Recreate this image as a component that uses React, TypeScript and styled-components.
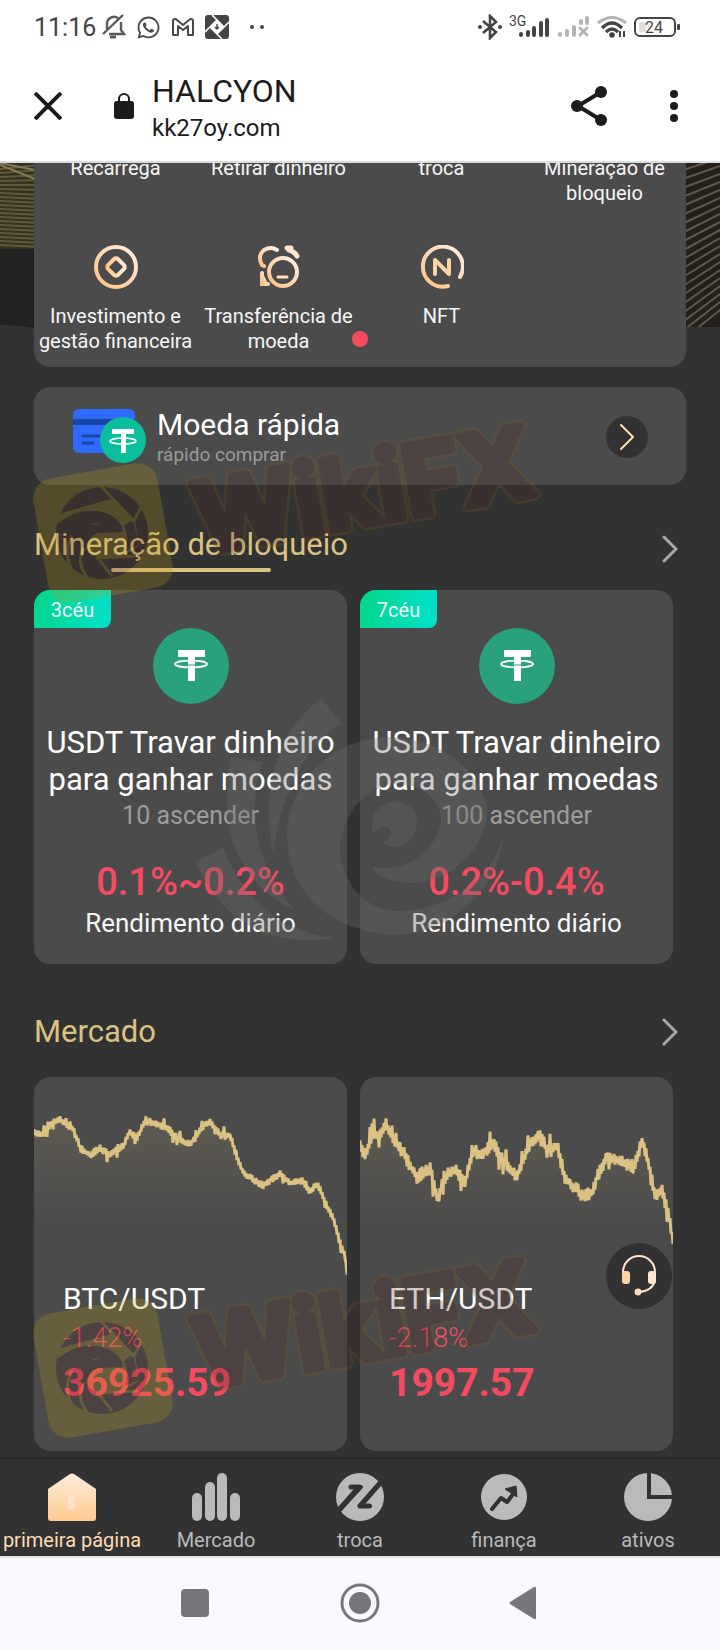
import React from "react";
import styled, { createGlobalStyle } from "styled-components";
import { FaWhatsapp } from "react-icons/fa";

const gold = "#dcc282";
const peach = "#ffdcb4";
const muted = "#bababa";
const panel = "#4b4b4b";
const base = "#323232";
const red = "#f44b60";

const GlobalStyle = createGlobalStyle`
  *, *::before, *::after { box-sizing: border-box; }
  body { margin: 0; background: ${base}; font-family: Roboto, "Liberation Sans", sans-serif; }
  h1, h2, h3, p { margin: 0; font-weight: 400; }
  button { border: 0; padding: 0; background: none; font: inherit; color: inherit; cursor: pointer; }
  a { color: inherit; text-decoration: none; }
  svg { display: block; flex: none; }
`;

const Page = styled.div`
  display: flex;
  flex-direction: column;
  min-height: 100vh;
`;

/* ---------- Phone status bar and browser bar ---------- */

const StatusBar = styled.div`
  display: flex;
  align-items: center;
  height: 54px;
  padding: 0 40px 0 34px;
  background: #fff;
  color: #444;
`;

const Clock = styled.time`
  font-size: 25px;
  line-height: 32px;
  margin: 2px 6px 0 0;
`;

const StatusGroup = styled.div<{ $end?: boolean }>`
  display: flex;
  align-items: center;
  gap: ${(p) => (p.$end ? "7px" : "10px")};
  margin-left: ${(p) => (p.$end ? "auto" : "0")};
`;

const BrowserBar = styled.header`
  display: flex;
  align-items: center;
  height: 109px;
  padding: 0 41px 4px 34px;
  background: #fff;
  border-bottom: 2px solid #dcdcdc;
  color: #1c1c1c;
`;

const IconButton = styled.button`
  display: grid;
  place-items: center;
  color: inherit;
`;

const LockSlot = styled.span`
  margin: 0 18px 0 52px;
`;

const Address = styled.div`
  flex: 1;
  min-width: 0;
  padding-top: 4px;
`;

const SiteTitle = styled.h1`
  font-size: 32px;
  line-height: 40px;
`;

const SiteUrl = styled.p`
  font-size: 24px;
  line-height: 34px;
`;

const BarActions = styled.div`
  display: flex;
  align-items: center;
  gap: 60px;
`;

/* ---------- Page content ---------- */

const Content = styled.main`
  position: relative;
  flex: 1;
  overflow: hidden;
  background: ${base};
  color: #f6f6f6;
  padding-bottom: 5px;
`;

const Backdrop = styled.svg`
  position: absolute;
  top: 0;
  left: 0;
  width: 100%;
  height: 166px;
`;

const Actions = styled.nav`
  position: relative;
  display: grid;
  grid-template-columns: repeat(4, 1fr);
  row-gap: 39px;
  margin: -7px 34px 20px;
  padding-bottom: 13px;
  background: ${panel};
  border-radius: 0 0 16px 16px;
`;

const Action = styled.a`
  display: flex;
  flex-direction: column;
  align-items: center;
  gap: 15px;
  font-size: 20px;
  line-height: 25px;
  text-align: center;
`;

const NoticeDot = styled.span`
  position: absolute;
  left: 50%;
  bottom: 20px;
  width: 16px;
  height: 16px;
  margin-left: -8px;
  border-radius: 50%;
  background: ${red};
`;

const QuickBuy = styled.a`
  display: flex;
  align-items: center;
  margin: 0 34px;
  height: 98px;
  padding: 1px 38px 0;
  border-radius: 16px;
  background: ${panel};
`;

const QuickText = styled.span`
  display: flex;
  flex-direction: column;
  flex: 1;
  padding-left: 10px;
`;

const QuickTitle = styled.strong`
  font-size: 30px;
  line-height: 36px;
  font-weight: 400;
  color: #fff;
`;

const QuickSub = styled.small`
  font-size: 19px;
  line-height: 24px;
  color: #9a9a9a;
`;

const RoundArrow = styled.span`
  display: grid;
  place-items: center;
  width: 42px;
  height: 42px;
  border-radius: 50%;
  background: ${base};
`;

const SectionHead = styled.div<{ $active?: boolean }>`
  display: flex;
  justify-content: space-between;
  align-items: center;
  margin: ${(p) => (p.$active ? "40px 42px 18px 34px" : "48px 42px 25px 34px")};
`;

const SectionTitle = styled.h2<{ $active?: boolean }>`
  font-size: 31px;
  line-height: 40px;
  color: ${gold};

  &::after {
    content: "";
    display: ${(p) => (p.$active ? "block" : "none")};
    width: 160px;
    height: 4px;
    margin: 3px auto 0;
    border-radius: 2px;
    background: ${gold};
  }
`;

const CardRow = styled.div`
  display: grid;
  grid-template-columns: 1fr 1fr;
  gap: 13px;
  padding: 0 47px 0 34px;
`;

const Card = styled.article`
  display: flex;
  flex-direction: column;
  height: 374px;
  border-radius: 16px;
  overflow: hidden;
  background: ${panel};
`;

const Term = styled.span`
  align-self: flex-start;
  width: 77px;
  height: 38px;
  border-radius: 6px 0 8px 0;
  background: linear-gradient(100deg, #04d68a, #02e0cc);
  font-size: 20px;
  line-height: 40px;
  text-align: center;
`;

const PoolBody = styled.div`
  display: flex;
  flex-direction: column;
  align-items: center;
  text-align: center;
`;

const PoolTitle = styled.h3`
  margin-top: 20px;
  font-size: 31px;
  line-height: 37px;
  font-weight: 400;
  color: #fff;
`;

const PoolLimit = styled.p`
  font-size: 25px;
  line-height: 36px;
  color: #9c9c9c;
`;

const PoolRate = styled.p`
  margin-top: 25px;
  font-size: 38px;
  font-weight: 500;
  line-height: 46px;
  color: ${red};
`;

const PoolCaption = styled.p`
  font-size: 26px;
  line-height: 36px;
`;

const Quote = styled.div`
  padding: 1px 29px;
`;

const Pair = styled.h3`
  font-size: 30px;
  line-height: 40px;
  color: #fff;
`;

const Change = styled.p`
  font-size: 27px;
  line-height: 38px;
  font-weight: 300;
  color: ${red};
`;

const Price = styled.p`
  font-size: 39px;
  line-height: 52px;
  font-weight: 700;
  color: ${red};
`;

const Support = styled.button`
  position: absolute;
  right: 48px;
  bottom: 148px;
  display: grid;
  place-items: center;
  width: 66px;
  height: 66px;
  border-radius: 50%;
  background: ${base};
`;

const Mark = styled.svg<{ $x: number; $y: number }>`
  position: absolute;
  left: ${(p) => p.$x}px;
  top: ${(p) => p.$y}px;
  pointer-events: none;
`;

/* ---------- Bottom bars ---------- */

const TabBar = styled.nav`
  display: grid;
  grid-template-columns: repeat(5, 1fr);
  height: 99px;
  padding-top: 14px;
  border-top: 2px solid #282828;
  background: ${base};
`;

const Tab = styled.a<{ $active?: boolean }>`
  display: flex;
  flex-direction: column;
  align-items: center;
  gap: 7px;
  font-size: 20px;
  line-height: 24px;
  white-space: nowrap;
  color: ${(p) => (p.$active ? peach : muted)};
`;

const SystemBar = styled.div`
  display: flex;
  justify-content: center;
  align-items: center;
  gap: 115px;
  height: 94px;
  padding-bottom: 2px;
  border-top: 2px solid #e4e4ea;
  background: #f9f9fe;
  color: #77777b;
`;

/* ---------- Drawings ---------- */

const Peach = ({ id }: { id: string }) => (
  <linearGradient id={id} x1="0" y1="1" x2="1" y2="0">
    <stop offset="0" stopColor="#ffc182" />
    <stop offset="0.6" stopColor="#ffdcbd" />
    <stop offset="1" stopColor="#fff0e2" />
  </linearGradient>
);

const BellOff = () => (
  <svg width="24" height="26" viewBox="0 0 24 26" fill="none" stroke="#5a5a5a" strokeWidth="2.4">
    <path d="M5 15V10a7 7 0 0 1 12-5M19 8v8l3 4H7M1 20 21 1" />
    <path d="M8 23h6" strokeWidth="3" />
  </svg>
);

const MailM = () => (
  <svg width="24" height="20" viewBox="0 0 24 20" fill="none" stroke="#4a4a4a" strokeWidth="2" strokeLinejoin="round">
    <path d="M2 18V4q0-2 2-2 1 0 2 1l6 5 6-5q1-1 2-1 2 0 2 2v14h-5V9l-5 4-5-4v9z" />
  </svg>
);

const Tile = () => (
  <svg width="24" height="24" viewBox="0 0 24 24">
    <rect width="24" height="24" rx="3" fill="#444" />
    <path d="M12 5 19 12 12 19 5 12z" fill="#fff" />
    <path d="M7 0 19 12M24 7 12 19M17 24 5 12M0 17 12 5" stroke="#fff" strokeWidth="1.6" />
    <path d="M12 9v5M10 12l2 2 2-2" stroke="#444" strokeWidth="1.4" fill="none" />
  </svg>
);

const Dots = () => (
  <svg width="16" height="6" viewBox="0 0 16 6" fill="#444">
    <circle cx="3" cy="3" r="2" />
    <circle cx="13" cy="3" r="2" />
  </svg>
);

const Bluetooth = () => (
  <svg width="24" height="26" viewBox="0 0 24 26" fill="none" stroke="#444" strokeWidth="2.6">
    <path d="M5 7 18 18l-6 6V2l6 6L5 19" />
    <circle cx="22" cy="13" r="2" fill="#444" stroke="none" />
    <circle cx="2" cy="13" r="2" fill="#444" stroke="none" />
  </svg>
);

const Signal3G = () => (
  <svg width="42" height="26" viewBox="0 0 42 26">
    <text x="0" y="12" fontFamily="Roboto, sans-serif" fontSize="14" fill="#444">3G</text>
    <g stroke="#444" strokeWidth="4" strokeLinecap="round">
      <path d="M12 21v-1M19 21v-3M25 21v-7M32 21V9M38 21V6" />
    </g>
  </svg>
);

const SignalNone = () => (
  <svg width="32" height="24" viewBox="0 0 32 24" fill="none" stroke="#b4b4b4" strokeWidth="4" strokeLinecap="round">
    <path d="M2 20v-1M9 20v-4M16 20v-8M23 8V6M29 8V3" />
    <path d="M22 13l7 7M29 13l-7 7" strokeWidth="3" />
  </svg>
);

const Wifi = () => (
  <svg width="30" height="24" viewBox="0 0 30 24" fill="none" strokeWidth="3">
    <path d="M1 8Q15-3 29 8" stroke="#b4b4b4" />
    <path d="M5 13Q15 3 25 13M9 17Q15 11 21 17" stroke="#444" strokeWidth="3.4" />
    <circle cx="15" cy="20" r="2.8" fill="#444" />
    <path d="M23 16v6M27 16v6" stroke="#444" strokeWidth="2" />
  </svg>
);

const Battery = () => (
  <svg width="46" height="22" viewBox="0 0 46 22">
    <rect x="1" y="2" width="40" height="18" rx="5" fill="none" stroke="#444" strokeWidth="2" />
    <rect x="43" y="8" width="3" height="6" rx="1" fill="#444" />
    <rect x="5" y="6" width="7" height="10" rx="2" fill="#ddd" />
    <text x="20" y="17" fontFamily="Roboto, sans-serif" fontSize="16" textAnchor="middle" fill="#444">24</text>
  </svg>
);

const Invest = () => (
  <svg width="44" height="44" viewBox="0 0 44 44" fill="none" stroke="url(#pInvest)" strokeWidth="4">
    <defs><Peach id="pInvest" /></defs>
    <circle cx="22" cy="22" r="20" />
    <rect x="15" y="15" width="14" height="14" rx="3" transform="rotate(45 22 22)" />
  </svg>
);

const Transfer = () => (
  <svg width="44" height="44" viewBox="0 0 44 44" fill="none" stroke="url(#pTransfer)" strokeWidth="4" strokeLinecap="round">
    <defs><Peach id="pTransfer" /></defs>
    <circle cx="26" cy="27" r="14" />
    <path d="M20 5Q14 1 7 5 0 11 5 20l2 1" />
    <path d="M21 32h9" stroke="#ffe2c8" strokeWidth="3" />
    <path d="M5 28v11h6M5 31l4 8" />
    <path d="M30 3h4M32 5q5 1 8 6" stroke="#ffe7d2" strokeWidth="5" />
  </svg>
);

const Nft = () => (
  <svg width="44" height="44" viewBox="0 0 44 44" fill="none" stroke="url(#pNft)" strokeWidth="4" strokeLinecap="round">
    <defs><Peach id="pNft" /></defs>
    <path d="M28 41A20 20 0 1 1 40 32" />
    <path d="M15 29V15L29 29V15" stroke="#ffd2a2" strokeLinejoin="round" />
  </svg>
);

const CardCoin = () => (
  <svg width="75" height="56" viewBox="0 0 75 56">
    <rect x="1" y="0" width="62" height="44" rx="6" fill="#2f6bfa" />
    <rect x="1" y="10" width="62" height="6" fill="#1c45a8" />
    <path d="M11 27h20M11 34h10" stroke="#1c45a8" strokeWidth="3" strokeLinecap="round" />
    <circle cx="51" cy="31" r="23" fill="#0cbf9c" />
    <path d="M40 20h22v5h-8v19h-5V25h-9z" fill="#fff" />
    <ellipse cx="51" cy="32" rx="13" ry="3" fill="none" stroke="#fff" strokeWidth="1.6" />
  </svg>
);

const Tether = () => (
  <svg width="76" height="76" viewBox="0 0 76 76">
    <circle cx="38" cy="38" r="38" fill="#28a17c" />
    <path d="M25 22h27v7H42v24h-7V29H25z" fill="#fff" />
    <ellipse cx="38" cy="36" rx="16" ry="3.4" fill="none" stroke="#fff" strokeWidth="1.8" />
    <path d="M35 37h7" stroke="#28a17c" strokeWidth="1" />
  </svg>
);

const Chevron = ({ color = "#a8a8a8", width = 3 }: { color?: string; width?: number }) => (
  <svg width="16" height="30" viewBox="0 0 16 30" fill="none" stroke={color} strokeWidth={width} strokeLinecap="round" strokeLinejoin="round">
    <path d="M2 3 14 15 2 27" />
  </svg>
);

const Headset = () => (
  <svg width="36" height="42" viewBox="0 0 36 42" fill="none" stroke="#ffe3cb" strokeWidth="2">
    <path d="M2 19V17a16 16 0 0 1 32 0v8q-2 11-17 12" />
    <rect x="1" y="16" width="8" height="13" rx="3" fill="#ffd2a6" stroke="none" />
    <rect x="27" y="16" width="8" height="13" rx="3" fill="#ffe7d3" stroke="none" />
    <circle cx="17" cy="37" r="3.4" fill="#ffd9b8" stroke="none" />
  </svg>
);

const HomeIcon = () => (
  <svg width="48" height="48" viewBox="0 0 48 48">
    <defs>
      <linearGradient id="home" x1="0" y1="0" x2="0" y2="1">
        <stop offset="0" stopColor="#ffeedd" />
        <stop offset="1" stopColor="#ffc98f" />
      </linearGradient>
    </defs>
    <path d="M22 1q2-1 4 0l22 15v29q0 3-3 3H3q-3 0-3-3V16z" fill="url(#home)" />
    <rect x="20" y="22" width="7" height="14" rx="3" fill="#ffe4cd" />
  </svg>
);

const BarsIcon = () => (
  <svg width="48" height="48" viewBox="0 0 48 48" fill={muted}>
    <rect x="0" y="20" width="10" height="28" rx="5" />
    <rect x="13" y="9" width="10" height="39" rx="5" />
    <rect x="25" y="0" width="10" height="48" rx="5" />
    <rect x="38" y="20" width="10" height="28" rx="5" />
  </svg>
);

const SwapIcon = () => (
  <svg width="48" height="48" viewBox="0 0 48 48" fill="none" stroke={base} strokeLinecap="round" strokeLinejoin="round">
    <circle cx="24" cy="24" r="24" fill={muted} stroke="none" />
    <path d="M2 38 23 14H15M45 9 24 33h9" strokeWidth="5" />
    <path d="M16 14h9L3 38M27 33h7" strokeWidth="4" />
  </svg>
);

const TrendIcon = () => (
  <svg width="48" height="48" viewBox="0 0 48 48">
    <circle cx="24" cy="24" r="23" fill={muted} />
    <path d="M12 36 21 25l6 4 7-9" fill="none" stroke={base} strokeWidth="4" strokeLinecap="round" strokeLinejoin="round" />
    <path d="M25 16 36 13l1 11z" fill={base} stroke={base} strokeWidth="1" strokeLinejoin="round" />
  </svg>
);

const PieIcon = () => (
  <svg width="48" height="48" viewBox="0 0 48 48">
    <circle cx="24" cy="24" r="24" fill={muted} />
    <path d="M25 0v24h23" fill="none" stroke={base} strokeWidth="4" />
  </svg>
);

const BackdropArt = () => (
  <Backdrop viewBox="0 0 720 166" preserveAspectRatio="none" aria-hidden="true">
    <rect width="40" height="166" fill="#222" />
    <rect width="40" height="86" fill="#35301f" />
    <g stroke="#5f583e" strokeWidth="2">
      {Array.from({ length: 20 }, (_, i) => (
        <path key={i} d={`M0 ${i * 4 + 6} L40 ${i * 4 + 8 - Math.max(0, 6 - i)}`} />
      ))}
      <path d="M0 2 40 18" stroke="#857a52" />
      <path d="M0 0 40 8" stroke="#857a52" />
    </g>
    <path d="M0 162Q20 162 40 166H0z" fill={base} />
    <rect x="680" width="40" height="164" fill="#241f1a" />
    <g stroke="#5e594b" strokeWidth="2">
      {Array.from({ length: 20 }, (_, i) => (
        <path key={i} d={`M680 ${i * 9 + 8} L720 ${i * 9 - 5 - i}`} />
      ))}
    </g>
    <rect x="680" y="164" width="40" height="2" fill={base} />
  </Backdrop>
);

const WikiMark = ({ y }: { y: number }) => (
  <Mark $x={20} $y={y} width="560" height="210" viewBox="0 0 560 210" aria-hidden="true">
    <g opacity="0.25">
      <rect x="20" y="72" width="126" height="126" rx="20" fill="#b89a14" transform="rotate(-10 83 135)" />
      <circle cx="82" cy="135" r="46" fill="#4e2824" />
      <path
        d="M38 116 94 100 115 122 119 148 100 160H80Q70 158 66 150 68 138 78 135L103 134Q102 122 86 115 60 107 37 126z"
        fill="#b89a14"
      />
      <path d="M104 128 113 121 119 147 105 153Q110 140 104 128z" fill="#4e2824" />
      <path
        d="M80 87 114 124M124 104 113 124M76 160 118 158M78 160 92 178M64 150Q54 168 72 184M52 138Q40 160 58 180"
        fill="none"
        stroke="#b89a14"
        strokeWidth="3"
      />
      <path d="M68 124q7 4 12 0-4 6-12 0z" fill="#b89a14" />
      <g
        transform="rotate(-10 210 170)"
        fontFamily="Inter, Roboto, sans-serif"
        fontSize="98"
        fontWeight="700"
        strokeLinejoin="round"
      >
        <text x="184" y="151" fill="#7d5c20" stroke="#7d5c20" strokeWidth="12">WikiFX</text>
        <text x="184" y="151" fill="#4e2824" stroke="#4e2824" strokeWidth="7">WikiFX</text>
      </g>
    </g>
  </Mark>
);

const SpiralMark = () => (
  <Mark $x={0} $y={517} width="520" height="280" viewBox="0 680 520 280" fill="#696969" fillOpacity="0.33" aria-hidden="true">
    <path d="M321 698 341 723Q286 762 273 853 254 752 321 698z" />
    <path d="M231 757 262 762Q238 842 294 910 210 868 231 757z" />
    <path d="M223 848 195 862Q238 954 335 938 256 930 223 848z" />
    <path d="M287 833C290 775 340 737 390 737C450 739 487 780 487 815C484 850 450 882 413 883C390 883 376 876 372 867C410 874 441 846 441 817C439 798 420 784 396 784C362 788 342 815 340 850C343 885 365 909 395 911C440 912 490 885 503 837C498 890 450 934 395 935C325 930 287 890 287 833z" />
    <path d="M372 822Q376 802 397 802 417 804 417 822 415 845 395 847 386 847 383 842 394 836 390 829 382 823 373 833z" />
  </Mark>
);

/* ---------- Price charts ---------- */

type Point = [number, number];

const btcPoints: Point[] = [
  [0, 56], [13, 57], [16, 47], [26, 43], [39, 52], [46, 71], [56, 78], [66, 71], [76, 78], [83, 71], [89, 70],
  [95, 55], [103, 61], [111, 45], [119, 45], [133, 51], [143, 60], [153, 67], [161, 63], [166, 52], [176, 44],
  [186, 58], [196, 58], [203, 80], [209, 95], [219, 103], [229, 108], [246, 97], [256, 106], [268, 104],
  [276, 114], [284, 107], [291, 126], [299, 140], [306, 166], [311, 180], [313, 196],
];

const ethPoints: Point[] = [
  [0, 70], [5, 77], [13, 57], [20, 59], [26, 48], [33, 61], [43, 76], [57, 100], [70, 91], [78, 124], [83, 101],
  [95, 92], [105, 107], [113, 74], [122, 77], [133, 66], [143, 83], [155, 98], [160, 94], [167, 71], [180, 56],
  [187, 74], [197, 68], [205, 101], [217, 113], [222, 119], [232, 115], [238, 98], [247, 80], [260, 84],
  [273, 91], [283, 63], [295, 118], [302, 113], [308, 136], [313, 164],
];

function trace(points: Point[], swing: number): string {
  let seed = 7;
  const random = () => {
    seed = (seed * 16807) % 2147483647;
    return seed / 2147483647;
  };
  const out: string[] = [];
  let k = 0;
  for (let x = 0; x <= 313; x += 1) {
    while (k < points.length - 2 && x > points[k + 1][0]) k += 1;
    const [x0, y0] = points[k];
    const [x1, y1] = points[k + 1];
    const mid = y0 + ((y1 - y0) * (x - x0)) / (x1 - x0);
    const spike = random() > 0.9 ? 2.4 : 1;
    const y = mid + (x % 2 ? 1 : -1) * (0.3 + 0.7 * random()) * swing * spike;
    out.push(`${x} ${Math.round(y * 10) / 10}`);
  }
  return out.join("L");
}

const Chart = ({ id, points, swing }: { id: string; points: Point[]; swing: number }) => {
  const line = trace(points, swing);
  return (
    <svg width="100%" height="201" viewBox="0 0 313 201" preserveAspectRatio="none" aria-hidden="true">
      <defs>
        <linearGradient id={id} gradientUnits="userSpaceOnUse" x1="0" y1="50" x2="0" y2="150">
          <stop offset="0" stopColor={gold} stopOpacity="0.12" />
          <stop offset="1" stopColor={gold} stopOpacity="0" />
        </linearGradient>
      </defs>
      <path d={`M${line}V201H0z`} fill={`url(#${id})`} />
      <path d={`M${line}`} fill="none" stroke={gold} strokeWidth="3" strokeLinejoin="bevel" />
    </svg>
  );
};

/* ---------- Data ---------- */

const actions = [
  { label: "Recarrega" },
  { label: "Retirar dinheiro" },
  { label: "troca" },
  { label: "Mineração de bloqueio" },
  { label: "Investimento e gestão financeira", icon: <Invest /> },
  { label: "Transferência de moeda", icon: <Transfer /> },
  { label: "NFT", icon: <Nft /> },
];

const pools = [
  { term: "3céu", limit: "10 ascender", rate: "0.1%~0.2%" },
  { term: "7céu", limit: "100 ascender", rate: "0.2%-0.4%" },
];

const quotes = [
  { id: "btc", pair: "BTC/USDT", change: "-1.42%", price: "36925.59", points: btcPoints, swing: 4 },
  { id: "eth", pair: "ETH/USDT", change: "-2.18%", price: "1997.57", points: ethPoints, swing: 7 },
];

const tabs = [
  { label: "primeira página", icon: <HomeIcon /> },
  { label: "Mercado", icon: <BarsIcon /> },
  { label: "troca", icon: <SwapIcon /> },
  { label: "finança", icon: <TrendIcon /> },
  { label: "ativos", icon: <PieIcon /> },
];

export default function App() {
  return (
    <Page>
      <GlobalStyle />
      <StatusBar>
        <Clock>11:16</Clock>
        <StatusGroup>
          <BellOff />
          <FaWhatsapp size={25} color="#4a4a4a" />
          <MailM />
          <Tile />
          <span />
          <Dots />
        </StatusGroup>
        <StatusGroup $end>
          <Bluetooth />
          <Signal3G />
          <SignalNone />
          <Wifi />
          <Battery />
        </StatusGroup>
      </StatusBar>

      <BrowserBar>
        <IconButton aria-label="Fechar">
          <svg width="28" height="28" viewBox="0 0 28 28" stroke="currentColor" strokeWidth="4">
            <path d="M1 1 27 27M27 1 1 27" />
          </svg>
        </IconButton>
        <LockSlot>
          <svg width="20" height="28" viewBox="0 0 20 28">
            <path d="M5 11V7a5 5 0 0 1 10 0v4" fill="none" stroke="#1c1c1c" strokeWidth="2" />
            <rect y="9" width="20" height="18" rx="3" fill="#1c1c1c" />
          </svg>
        </LockSlot>
        <Address>
          <SiteTitle>HALCYON</SiteTitle>
          <SiteUrl>kk27oy.com</SiteUrl>
        </Address>
        <BarActions>
          <IconButton aria-label="Compartilhar">
            <svg width="40" height="42" viewBox="0 0 40 42" fill="currentColor">
              <path d="M32 7 9 21l23 14" fill="none" stroke="currentColor" strokeWidth="4" />
              <circle cx="8" cy="21" r="6" />
              <circle cx="32" cy="7" r="6" />
              <circle cx="32" cy="35" r="6" />
            </svg>
          </IconButton>
          <IconButton aria-label="Mais opções">
            <svg width="10" height="34" viewBox="0 0 10 34" fill="currentColor">
              <circle cx="5" cy="5" r="4" />
              <circle cx="5" cy="17" r="4" />
              <circle cx="5" cy="29" r="4" />
            </svg>
          </IconButton>
        </BarActions>
      </BrowserBar>

      <Content>
        <BackdropArt />
        <Actions>
          {actions.map((a) => (
            <Action href="#" key={a.label}>
              {a.icon}
              <span>{a.label}</span>
            </Action>
          ))}
          <NoticeDot />
        </Actions>

        <QuickBuy href="#">
          <CardCoin />
          <QuickText>
            <QuickTitle>Moeda rápida</QuickTitle>
            <QuickSub>rápido comprar</QuickSub>
          </QuickText>
          <RoundArrow>
            <Chevron color={peach} width={2} />
          </RoundArrow>
        </QuickBuy>

        <SectionHead $active>
          <SectionTitle $active>Mineração de bloqueio</SectionTitle>
          <a href="#" aria-label="Ver mineração"><Chevron /></a>
        </SectionHead>
        <CardRow>
          {pools.map((p) => (
            <Card key={p.term}>
              <Term>{p.term}</Term>
              <PoolBody>
                <Tether />
                <PoolTitle>USDT Travar dinheiro<br />para ganhar moedas</PoolTitle>
                <PoolLimit>{p.limit}</PoolLimit>
                <PoolRate>{p.rate}</PoolRate>
                <PoolCaption>Rendimento diário</PoolCaption>
              </PoolBody>
            </Card>
          ))}
        </CardRow>

        <SectionHead>
          <SectionTitle>Mercado</SectionTitle>
          <a href="#" aria-label="Ver mercado"><Chevron /></a>
        </SectionHead>
        <CardRow>
          {quotes.map((q) => (
            <Card key={q.id}>
              <Chart id={q.id} points={q.points} swing={q.swing} />
              <Quote>
                <Pair>{q.pair}</Pair>
                <Change>{q.change}</Change>
                <Price>{q.price}</Price>
              </Quote>
            </Card>
          ))}
        </CardRow>

        <WikiMark y={235} />
        <SpiralMark />
        <WikiMark y={1070} />
        <Support aria-label="Atendimento"><Headset /></Support>
      </Content>

      <TabBar>
        {tabs.map((t, i) => (
          <Tab href="#" key={t.label} $active={i === 0}>
            {t.icon}
            <span>{t.label}</span>
          </Tab>
        ))}
      </TabBar>

      <SystemBar>
        <IconButton aria-label="Recentes">
          <svg width="48" height="40" viewBox="0 0 48 40" fill="currentColor">
            <rect x="8" y="6" width="28" height="28" rx="4" />
          </svg>
        </IconButton>
        <IconButton aria-label="Início">
          <svg width="48" height="40" viewBox="0 0 48 40" fill="currentColor">
            <circle cx="24" cy="20" r="18" fill="none" stroke="currentColor" strokeWidth="3" />
            <circle cx="24" cy="20" r="11" />
          </svg>
        </IconButton>
        <IconButton aria-label="Voltar">
          <svg width="48" height="40" viewBox="0 0 48 40" fill="currentColor">
            <path d="M11 19 35 4q2-1 2 1v30q0 2-2 1L11 21q-1-1 0-2z" />
          </svg>
        </IconButton>
      </SystemBar>
    </Page>
  );
}
